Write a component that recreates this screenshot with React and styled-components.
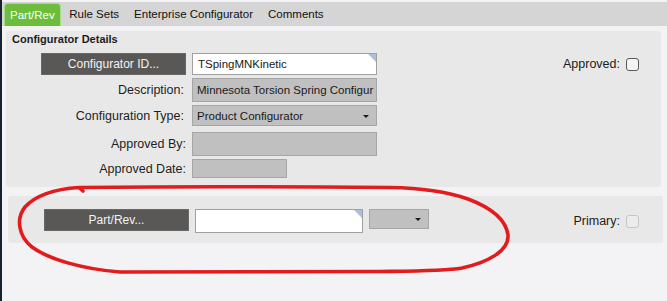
import React from "react";
import styled, { createGlobalStyle } from "styled-components";

const Global = createGlobalStyle`
  html, body { margin: 0; padding: 0; background: #f3f3f5; }
  body { font-family: "Liberation Sans", Arial, sans-serif; font-size: 11.5px; color: #1c1c1c; }
`;

const Frame = styled.div`
  position: relative;
  width: 667px;
  height: 301px;
  box-sizing: border-box;
  border-left: 2px solid #17222f;
  background: #f3f3f5;
  overflow: hidden;
`;

const TabBar = styled.div`
  margin-top: 2px;
  height: 24px;
  background: #d5d5d5;
  display: flex;
  align-items: flex-end;
  padding-left: 2px;
`;

const Tab = styled.div`
  height: ${(p) => (p.$active ? "23px" : "24px")};
  box-sizing: border-box;
  display: flex;
  align-items: center;
  padding: ${(p) => (p.$active ? "0 5px" : "0 7.5px")};
  margin-right: ${(p) => (p.$active ? "1px" : "0")};
  color: ${(p) => (p.$active ? "#fff" : "#111")};
  background: ${(p) => (p.$active ? "#6bbd3b" : "transparent")};
  border: ${(p) => (p.$active ? "1px solid #a6dc85" : "none")};
  border-bottom: none;
  border-radius: 4px 4px 0 0;
  white-space: nowrap;
`;

const Content = styled.div`
  padding: 5px 0 0 0;
  display: flex;
  flex-direction: column;
  gap: 9px;
`;

const Panel = styled.div`
  margin-left: ${(p) => p.$left}px;
  width: 655px;
  box-sizing: border-box;
  background: #e8e8e8;
  border-radius: 3px;
  padding: ${(p) => p.$pad};
`;

const Title = styled.div`
  font-weight: bold;
  font-size: 11px;
  line-height: 14px;
  padding-left: 3px;
  margin-bottom: 7px;
`;

const Rows = styled.div`
  display: flex;
  flex-direction: column;
  padding-left: 32px;
`;

const Row = styled.div`
  display: flex;
  align-items: center;
  height: ${(p) => p.$h}px;
  margin-bottom: ${(p) => p.$mb || 0}px;
`;

const Label = styled.div`
  width: 145px;
  text-align: right;
  padding-right: ${(p) => p.$pr}px;
  box-sizing: border-box;
  white-space: nowrap;
  font-size: 12.5px;
  color: #1e1e1e;
`;

const DarkButton = styled.div`
  width: 145px;
  height: 22px;
  box-sizing: border-box;
  background: #5a5856;
  border: 1px solid #6a6866;
  color: #f2f2f2;
  font-size: 12px;
  display: flex;
  align-items: center;
  justify-content: center;
  flex-shrink: 0;
`;

const Field = styled.div`
  position: relative;
  margin-left: 6px;
  width: ${(p) => p.$w}px;
  height: ${(p) => p.$h}px;
  box-sizing: border-box;
  background: ${(p) => (p.$white ? "#ffffff" : "#c0c0c0")};
  border: 1px solid ${(p) => (p.$white ? "#a0a0a0" : "#a6a6a6")};
  display: flex;
  align-items: center;
  padding-left: ${(p) => (p.$white ? 5 : 4)}px;
  padding-right: 2px;
  white-space: nowrap;
  overflow: hidden;
  color: #1a1a1a;
  flex-shrink: 0;
`;

const Corner = styled.span`
  position: absolute;
  top: 0;
  right: 0;
  width: 0;
  height: 0;
  border-top: 8px solid #a9c1df;
  border-left: 8px solid transparent;
`;

const Arrow = styled.span`
  position: absolute;
  right: 7px;
  top: 50%;
  margin-top: -1px;
  width: 0;
  height: 0;
  border-left: 3px solid transparent;
  border-right: 3px solid transparent;
  border-top: 3px solid #1a1a1a;
`;

const Spacer = styled.div`
  flex: 1;
`;

const CheckWrap = styled.div`
  display: flex;
  align-items: center;
  gap: 6px;
  font-size: 12.5px;
  white-space: nowrap;
  margin-left: ${(p) => (p.$auto ? "auto" : "0")};
  align-self: center;
`;

const Check = styled.span`
  width: 13px;
  height: 13px;
  box-sizing: border-box;
  border: 1px solid ${(p) => (p.$disabled ? "#c6c6c6" : "#5a5a5a")};
  border-radius: 3px;
  background: ${(p) => (p.$disabled ? "#ececec" : "#f4f4f4")};
  display: inline-block;
`;

const PartRow = styled.div`
  display: flex;
  align-items: flex-start;
  height: 24px;
`;

const Overlay = styled.svg`
  position: absolute;
  left: -2px;
  top: 0;
  pointer-events: none;
`;

export default function App() {
  return (
    <>
      <Global />
      <Frame>
        <TabBar>
          <Tab $active>Part/Rev</Tab>
          <Tab>Rule Sets</Tab>
          <Tab>Enterprise Configurator</Tab>
          <Tab>Comments</Tab>
        </TabBar>
        <Content>
          <Panel $left={4} $pad="1px 22px 9px 3px">
            <Title>Configurator Details</Title>
            <Rows>
              <Row $h={22} $mb={3}>
                <DarkButton>Configurator ID...</DarkButton>
                <Field $white $w={185} $h={22}>
                  TSpingMNKinetic
                  <Corner />
                </Field>
                <Spacer />
                <CheckWrap>
                  Approved: <Check />
                </CheckWrap>
              </Row>
              <Row $h={24} $mb={3}>
                <Label $pr={2}>Description:</Label>
                <Field $w={185} $h={24}>Minnesota Torsion Spring Configur</Field>
              </Row>
              <Row $h={21} $mb={6}>
                <Label $pr={2}>Configuration Type:</Label>
                <Field $w={185} $h={21}>
                  Product Configurator
                  <Arrow />
                </Field>
              </Row>
              <Row $h={24} $mb={3}>
                <Label $pr={0}>Approved By:</Label>
                <Field $w={185} $h={24} />
              </Row>
              <Row $h={19}>
                <Label $pr={0}>Approved Date:</Label>
                <Field $w={95} $h={19} />
              </Row>
            </Rows>
          </Panel>
          <Panel $left={6} $pad="13px 24px 10px 36px">
            <PartRow>
              <DarkButton>Part/Rev...</DarkButton>
              <Field $white $w={168} $h={24}>
                <Corner />
              </Field>
              <Field $w={60} $h={20}>
                <Arrow />
              </Field>
              <CheckWrap $auto>
                Primary: <Check $disabled />
              </CheckWrap>
            </PartRow>
          </Panel>
        </Content>
        <Overlay width="667" height="301" viewBox="0 0 667 301">
          <path
            d="M 83 191 L 79 187.5 C 180 186.5, 330 187, 390 187.5 C 425 188, 448 192, 468 199 C 492 208, 506 220, 508 235 C 509 250, 490 262, 462 268 C 445 271, 420 271, 380 271.5 L 120 272 C 82 269, 48 259, 32 247 C 18 236, 16 218, 25 207 C 36 195, 56 189, 79 187.5"
            fill="none"
            stroke="#e21b1d"
            strokeWidth="3.6"
            strokeLinecap="round"
            strokeLinejoin="round"
          />
        </Overlay>
      </Frame>
    </>
  );
}
